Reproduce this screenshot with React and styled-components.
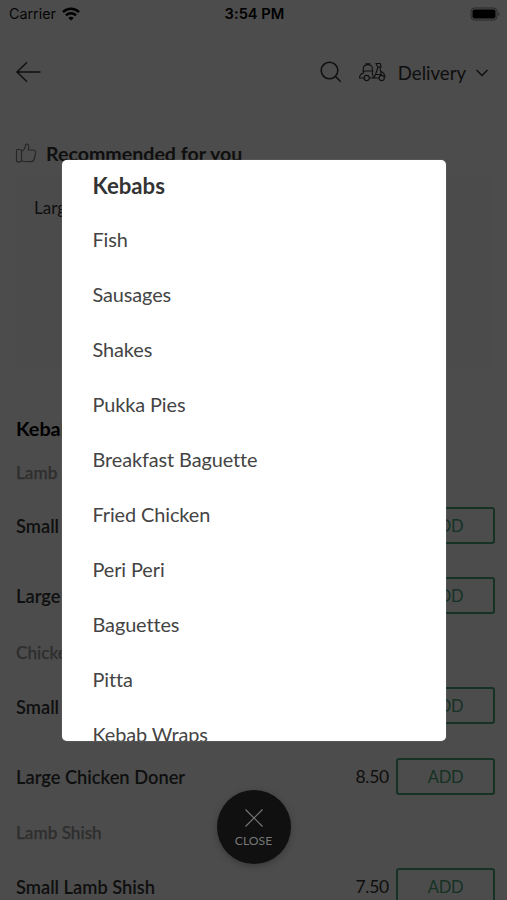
import React from 'react';
import styled, { createGlobalStyle } from 'styled-components';

const GlobalStyle = createGlobalStyle`
  * {
    box-sizing: border-box;
  }

  body {
    margin: 0;
    overflow: hidden;
    background: #fff;
    font-family: Lato, "Liberation Sans", sans-serif;
    font-variant-ligatures: none;
    color: #333;
  }
`;

const Screen = styled.div`
  position: relative;
  width: 507px;
  height: 900px;
  overflow: hidden;
  background: #fff;
`;

const StatusBar = styled.div`
  display: grid;
  grid-template-columns: 1fr auto 1fr;
  align-items: center;
  height: 27px;
  padding: 0 7px 0 9px;
  font-family: Inter, "Liberation Sans", sans-serif;
  font-size: 14.3px;
  color: #111;
`;

const Carrier = styled.div`
  display: flex;
  align-items: center;
  gap: 6px;
`;

const Clock = styled.div`
  font-size: 14.7px;
  font-weight: 600;
  color: #000;
`;

const BatteryIcon = styled.svg`
  justify-self: end;
`;

const Header = styled.header`
  display: flex;
  align-items: center;
  height: 90px;
  padding: 0 18px 0 15px;
`;

const HeaderActions = styled.div`
  display: flex;
  align-items: center;
  margin-left: auto;
`;

const Delivery = styled.div`
  display: flex;
  align-items: center;
  gap: 9px;
  margin-left: 12px;
  padding-top: 2px;
  font-size: 18.6px;
  line-height: 24px;
`;

const ScooterIcon = styled.svg`
  margin-left: 16px;
`;

const SectionTitle = styled.div`
  display: flex;
  align-items: center;
  gap: 9px;
  height: 26px;
  margin-top: 23px;
  padding-left: 15px;
  font-size: 19.6px;
  font-weight: 700;
  color: #333;
`;

const Card = styled.div`
  height: 192px;
  margin: 10px 13px 0 16px;
  padding: 21px 18px;
  background: #fcfcfc;
  font-size: 17px;
  line-height: 22px;
`;

const MenuTitle = styled.h2`
  margin: 47px 0 0 16px;
  font-size: 19.8px;
  font-weight: 700;
  line-height: 26px;
  color: #000;
`;

const GroupName = styled.div`
  height: ${props => (props.$first ? 49 : 40)}px;
  padding: ${props => (props.$first ? 21 : 11)}px 16px 0;
  font-size: 17.2px;
  font-weight: 500;
  line-height: 22px;
  color: #999;
  -webkit-text-stroke: 0.25px #999;
`;

const Item = styled.div`
  display: flex;
  align-items: center;
  height: 70.3px;
  padding: 0 12px 0 16px;
  font-size: 18.3px;
`;

const ItemName = styled.div`
  flex: 1;
  padding-top: 2px;
  font-weight: 600;
`;

const Price = styled.div`
  font-size: 17.5px;
  letter-spacing: -0.25px;
`;

const AddButton = styled.button`
  width: 99px;
  height: 37px;
  margin-left: 7px;
  padding: 1px 0 0;
  border: 2px solid #48a878;
  border-radius: 3px;
  background: none;
  font-family: inherit;
  font-size: 16.5px;
  letter-spacing: -0.2px;
  color: #48a878;
`;

const Overlay = styled.div`
  position: absolute;
  inset: 0;
  display: flex;
  flex-direction: column;
  align-items: center;
  padding-top: 160px;
  background: rgba(0, 0, 0, 0.7);
`;

const Dialog = styled.div`
  width: 384px;
  height: 581px;
  flex-shrink: 0;
  padding-left: 31px;
  overflow: hidden;
  border-radius: 5px;
  background: #fff;
  box-shadow: 0 0 1px #aaa;
`;

const Category = styled.div`
  height: 55px;
  font-size: 19.9px;
  line-height: 26px;
  letter-spacing: -0.1px;
  color: #444;
`;

const CategoryTitle = styled.div`
  height: 66px;
  padding-top: 13px;
  font-size: 22.2px;
  font-weight: 700;
  line-height: 26px;
  color: #333;
`;

const CloseButton = styled.button`
  display: flex;
  flex-direction: column;
  align-items: center;
  width: 74px;
  height: 74px;
  flex-shrink: 0;
  margin-top: 49px;
  padding: 18px 0 0;
  border: 0;
  border-radius: 50%;
  background: #101010;
  box-shadow: 0 2px 7px rgba(0, 0, 0, 0.25);
  font-family: inherit;
  font-size: 12.2px;
  line-height: 16px;
  color: #777;

  svg {
    margin-bottom: 5px;
  }
`;

const categories = [
  'Fish',
  'Sausages',
  'Shakes',
  'Pukka Pies',
  'Breakfast Baguette',
  'Fried Chicken',
  'Peri Peri',
  'Baguettes',
  'Pitta',
  'Kebab Wraps',
];

const groups = [
  {
    name: 'Lamb Doner',
    items: [
      { name: 'Small Lamb Doner', price: '6.50' },
      { name: 'Large Lamb Doner', price: '8.50' },
    ],
  },
  {
    name: 'Chicken Doner',
    items: [
      { name: 'Small Chicken Doner', price: '6.50' },
      { name: 'Large Chicken Doner', price: '8.50' },
    ],
  },
  {
    name: 'Lamb Shish',
    items: [{ name: 'Small Lamb Shish', price: '7.50' }],
  },
];

const Wifi = () => (
  <svg width="18" height="14" viewBox="0 0 18 14" fill="none" stroke="#000" strokeWidth="2.5">
    <path d="M1 5.2C5.5.7 12.5.7 17 5.2" />
    <path d="M4 8.4c2.8-2.8 7.2-2.8 10 0" />
    <path d="M9 13.6 6.3 10.9c1.5-1.5 3.9-1.5 5.4 0z" fill="#000" stroke="none" />
  </svg>
);

const Battery = () => (
  <BatteryIcon width="30" height="14" viewBox="0 0 30 14">
    <rect x="1" y="1" width="26" height="12" rx="3.5" fill="none" stroke="#888" />
    <rect x="2.5" y="2.5" width="23" height="9" rx="1.8" fill="#000" />
    <path d="M28.3 5v4c1.6-.6 1.6-3.4 0-4z" fill="#888" />
  </BatteryIcon>
);

const BackArrow = () => (
  <svg width="27" height="22" viewBox="0 0 27 22" fill="none" stroke="#333" strokeWidth="1.5">
    <path d="M25.5 11H2M12 1.2 2 11l10 9.800" />
  </svg>
);

const Search = () => (
  <svg width="22" height="22" viewBox="0 0 22 22" fill="none" stroke="#333" strokeWidth="1.5">
    <circle cx="9.5" cy="9.5" r="8.3" />
    <path d="m15.5 15.5 5.3 5.3" />
  </svg>
);

const Scooter = () => (
  <ScooterIcon width="28" height="20" viewBox="0 0 28 20" fill="none" stroke="#333" strokeWidth="1.1">
    <path d="M5.3 9V6.5c0-2.3 1.7-3.7 4.5-3.7s4.5 1.4 4.5 3.7V9M7.8 3V1.8h4V3M4.5 9h10.8" />
    <path d="M5.5 9v2C3 11.8 1.5 13.7 1.5 16h4.7M14.5 9c-1 3 1 3.5.8 7h-4.1M11.2 16h9.900" />
    <path d="M18 1.5h4.2l1 3.500h-3.500zM20 5l-2.500 7.500h5.700L21.800 5M23.200 9.500c2.500 1.200 3.800 3.500 3.800 6M17.500 12.500 16 16" />
    <circle cx="8.7" cy="16" r="2.6" />
    <circle cx="23.7" cy="16" r="2.6" />
  </ScooterIcon>
);

const Chevron = () => (
  <svg width="14" height="8" viewBox="0 0 14 8" fill="none" stroke="#333" strokeWidth="1.5">
    <path d="m1.500 1 5.500 5.500L12.500 1" />
  </svg>
);

const ThumbUp = () => (
  <svg width="22" height="20" viewBox="0 0 22 20" fill="none" stroke="#808080" strokeWidth="1.2" strokeLinejoin="round">
    <path d="M2.5 6.5h3a1 1 0 0 1 1 1v10.300a1 1 0 0 1-1 1h-3a1 1 0 0 1-1-1V7.500a1 1 0 0 1 1-1z" />
    <path d="M6.5 8.5c2.500-1.200 4-3.800 4-7 2.700-1.200 4.200 1.300 2.700 5.500h5.300c2.600 0 2.300 2.500 1.700 5l-1 4c-.5 2-1.200 2.600-3 2.600-4 .2-7 .2-9.700-.6" />
  </svg>
);

const Cross = () => (
  <svg width="20" height="20" viewBox="0 0 20 20" fill="none" stroke="#777" strokeWidth="1.2">
    <path d="m1.5 1.5 17 17M18.5 1.500l-17 17" />
  </svg>
);

const App = () => (
  <Screen>
    <GlobalStyle />
    <StatusBar>
      <Carrier>
        Carrier
        <Wifi />
      </Carrier>
      <Clock>3:54 PM</Clock>
      <Battery />
    </StatusBar>
    <Header>
      <BackArrow />
      <HeaderActions>
        <Search />
        <Scooter />
        <Delivery>
          Delivery
          <Chevron />
        </Delivery>
      </HeaderActions>
    </Header>
    <SectionTitle>
      <ThumbUp />
      Recommended for you
    </SectionTitle>
    <Card>Large</Card>
    <MenuTitle>Kebabs</MenuTitle>
    {groups.map((group, i) => (
      <React.Fragment key={group.name}>
        <GroupName $first={i === 0}>{group.name}</GroupName>
        {group.items.map(item => (
          <Item key={item.name}>
            <ItemName>{item.name}</ItemName>
            <Price>{item.price}</Price>
            <AddButton>ADD</AddButton>
          </Item>
        ))}
      </React.Fragment>
    ))}
    <Overlay>
      <Dialog>
        <CategoryTitle>Kebabs</CategoryTitle>
        {categories.map(name => <Category key={name}>{name}</Category>)}
      </Dialog>
      <CloseButton>
        <Cross />
        CLOSE
      </CloseButton>
    </Overlay>
  </Screen>
);

export default App;
